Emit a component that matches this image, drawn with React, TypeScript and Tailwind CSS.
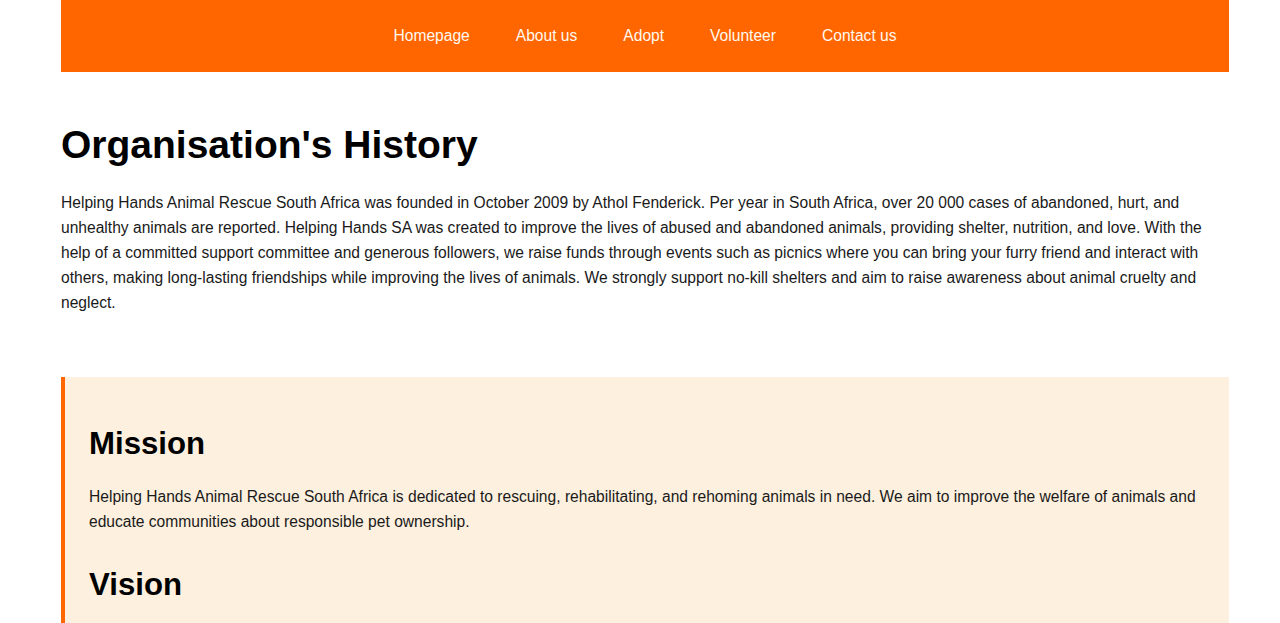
const links = ["Homepage", "About us", "Adopt", "Volunteer", "Contact us"];

export default function App() {
  return (
    <div
      className="min-h-screen bg-white text-[#1a1a1a]"
      style={{ fontFamily: '"Liberation Sans", Arial, sans-serif' }}
    >
      <div className="ml-[61px] w-[1168px]">
        {/* Nav */}
        <nav className="h-[72px] bg-[#ff6600] flex items-center justify-center gap-[46px]">
          {links.map((l) => (
            <a key={l} href="#" className="text-[15.6px] text-[#fff8ee]">
              {l}
            </a>
          ))}
        </nav>

        {/* History */}
        <section className="pt-[50px]">
          <h1 className="text-[39px] leading-[46px] font-bold text-black">
            Organisation's History
          </h1>
          <p className="mt-[22px] text-[15.6px] leading-[25px]">
            Helping Hands Animal Rescue South Africa was founded in October 2009 by Athol Fenderick. Per year in South Africa, over 20 000 cases of abandoned, hurt, and unhealthy animals are reported. Helping Hands SA was created to improve the lives of abused and abandoned animals, providing shelter, nutrition, and love. With the help of a committed support committee and generous followers, we raise funds through events such as picnics where you can bring your furry friend and interact with others, making long-lasting friendships while improving the lives of animals. We strongly support no-kill shelters and aim to raise awareness about animal cruelty and neglect.
          </p>
        </section>

        {/* Mission / Vision */}
        <section className="mt-[62px] bg-[#fdf0de] border-l-4 border-[#ff6600] px-6 pt-[48px] pb-16">
          <h2 className="text-[31.2px] leading-[37px] font-bold text-black">Mission</h2>
          <p className="mt-[22px] text-[15.6px] leading-[25px]">
            Helping Hands Animal Rescue South Africa is dedicated to rescuing, rehabilitating, and rehoming animals in need. We aim to improve the welfare of animals and educate communities about responsible pet ownership.
          </p>
          <h2 className="mt-[32px] text-[31.2px] leading-[37px] font-bold text-black">Vision</h2>
        </section>
      </div>
    </div>
  );
}
